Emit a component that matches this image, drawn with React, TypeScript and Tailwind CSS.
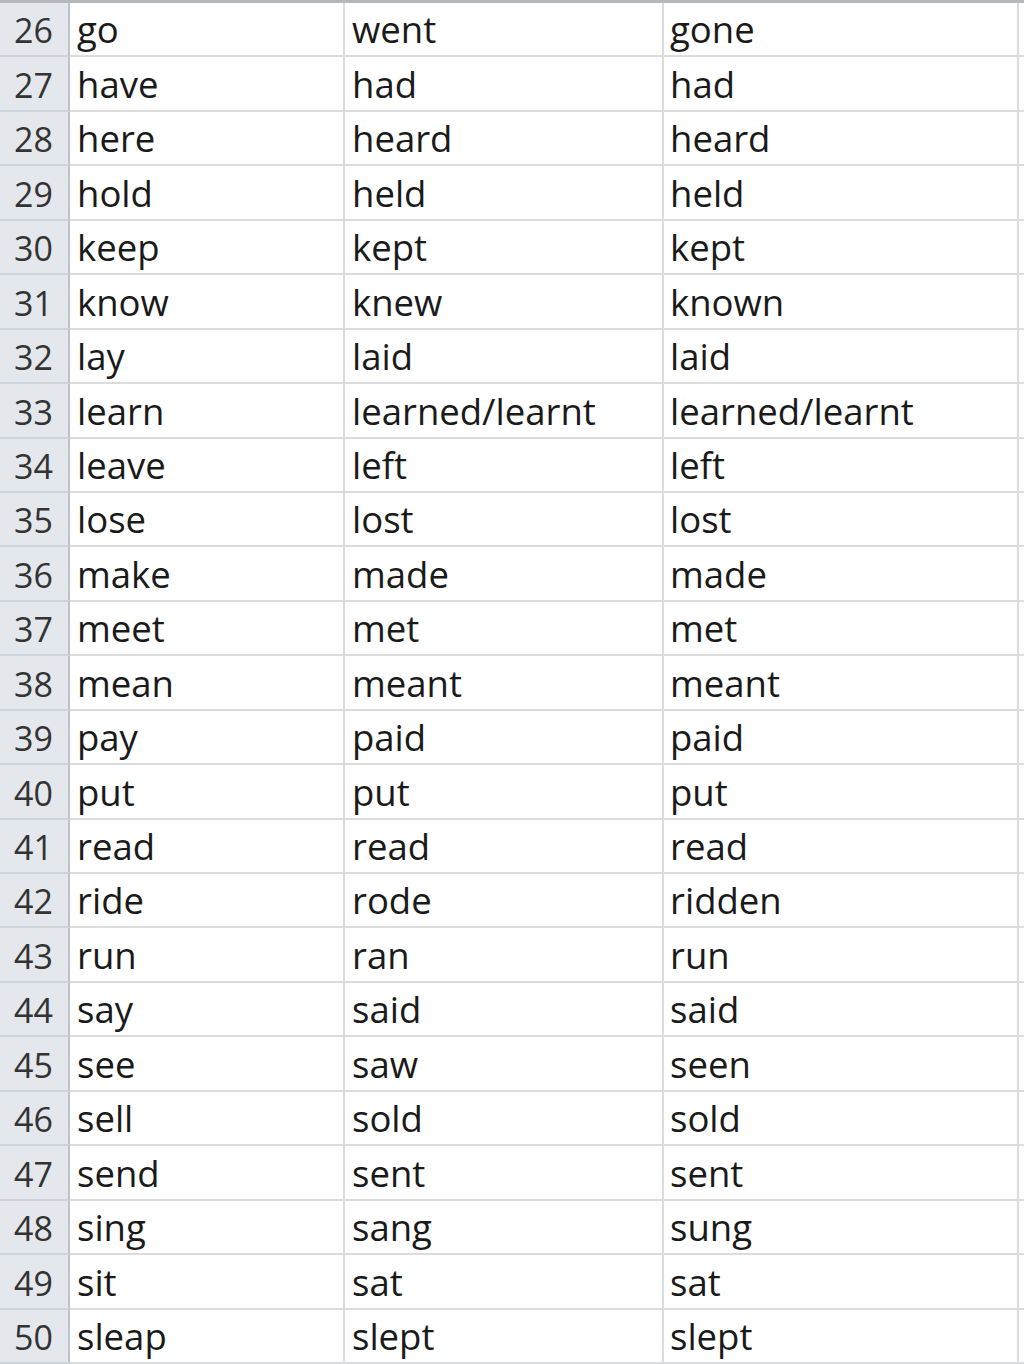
const rows: [number, string, string, string][] = [
  [26, "go", "went", "gone"],
  [27, "have", "had", "had"],
  [28, "here", "heard", "heard"],
  [29, "hold", "held", "held"],
  [30, "keep", "kept", "kept"],
  [31, "know", "knew", "known"],
  [32, "lay", "laid", "laid"],
  [33, "learn", "learned/learnt", "learned/learnt"],
  [34, "leave", "left", "left"],
  [35, "lose", "lost", "lost"],
  [36, "make", "made", "made"],
  [37, "meet", "met", "met"],
  [38, "mean", "meant", "meant"],
  [39, "pay", "paid", "paid"],
  [40, "put", "put", "put"],
  [41, "read", "read", "read"],
  [42, "ride", "rode", "ridden"],
  [43, "run", "ran", "run"],
  [44, "say", "said", "said"],
  [45, "see", "saw", "seen"],
  [46, "sell", "sold", "sold"],
  [47, "send", "sent", "sent"],
  [48, "sing", "sang", "sung"],
  [49, "sit", "sat", "sat"],
  [50, "sleap", "slept", "slept"],
];

export default function App() {
  return (
    <div className="w-[1024px] h-[1364px] overflow-hidden bg-white font-['Open_Sans',sans-serif] font-medium text-[36.5px] text-[#1a1a1a]">
      <div className="h-[3px] bg-[#b4b8bd]" />
      {rows.map(([n, base, past, participle]) => (
        <div key={n} className="grid grid-cols-[70px_275px_319px_355px_1fr] h-[54.44px]">
          <div className="flex items-end justify-end pr-[15px] pb-[1px] leading-[48px] text-[34px] bg-[#e4e7eb] text-[#333] border-r-2 border-b-2 border-r-[#bcc3cc] border-b-[#cfd4da]">
            {n}
          </div>
          <div className="flex items-end pl-[7px] pb-[2px] leading-[48px] border-r-2 border-b-2 border-[#dadcdd]">
            {base}
          </div>
          <div className="flex items-end pl-[7px] pb-[2px] leading-[48px] border-r-2 border-b-2 border-[#dadcdd]">
            {past}
          </div>
          <div className="flex items-end pl-[6px] pb-[2px] leading-[48px] border-r-2 border-b-2 border-[#dadcdd]">
            {participle}
          </div>
          <div className="border-b-2 border-[#dadcdd]" />
        </div>
      ))}
    </div>
  );
}
